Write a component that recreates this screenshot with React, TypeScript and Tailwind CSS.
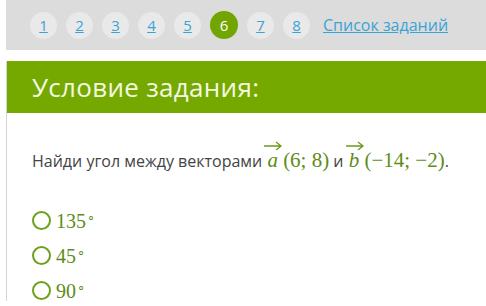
const pages = [1, 2, 3, 4, 5, 6, 7, 8];
const answers = ["135", "45", "90"];

function Vec({ letter }: { letter: string }) {
  return (
    <span className="relative inline-block italic px-[1px]">
      <svg
        className="absolute left-[-3px] top-[-5px]"
        width="20"
        height="10"
        viewBox="0 0 20 10"
        fill="none"
        stroke="#6b9a1c"
        strokeWidth="1.3"
      >
        <path d="M1 6h17M13 2l5 4-5 4" />
      </svg>
      {letter}
    </span>
  );
}

export default function App() {
  return (
    <div className="w-[486px] h-[306px] overflow-hidden bg-white font-['Open_Sans',sans-serif]">
      {/* Pager */}
      <div className="ml-[6px] h-[50px] bg-[#dcdcdc] flex items-center pl-[24px] gap-[9px]">
        {pages.map((p) =>
          p === 6 ? (
            <div
              key={p}
              className="w-[28px] h-[28px] rounded-full bg-[#72a500] text-white text-[15px] flex items-center justify-center"
            >
              {p}
            </div>
          ) : (
            <div
              key={p}
              className="w-[27px] h-[27px] rounded-full bg-[#e9e9e9] text-[#3aa3d6] text-[15px] underline flex items-center justify-center"
            >
              {p}
            </div>
          )
        )}
        <a className="ml-[4px] text-[#3aa3d6] text-[16px] underline">Список заданий</a>
      </div>

      {/* Card */}
      <div className="mt-[11px] ml-[6px] border-l border-[#d4d4d4]">
        <div className="h-[52px] bg-[#76a900] flex items-center pl-[25px] text-[#f3f8e0] text-[26px] tracking-[0.3px]">
          Условие задания:
        </div>
        <div className="pl-[25px] pt-[32px]">
          <div className="text-[16px] text-[#444] flex items-baseline">
            <span>Найди угол между векторами&nbsp;</span>
            <span className="font-['Liberation_Serif',serif] text-[#5e8c17] text-[21px]">
              <Vec letter="a" />&thinsp;(6;&nbsp;8)
            </span>
            <span>&nbsp;и&nbsp;</span>
            <span className="font-['Liberation_Serif',serif] text-[#5e8c17] text-[21px]">
              <Vec letter="b" />&thinsp;(−14;&nbsp;−2)
            </span>
            <span>.</span>
          </div>
          <div className="mt-[34px] flex flex-col gap-[15px]">
            {answers.map((a) => (
              <div key={a} className="flex items-center gap-[5px]">
                <div className="w-[19px] h-[19px] rounded-full border-2 border-[#6f9f1e]" />
                <span className="font-['Liberation_Serif',serif] text-[#5e8c17] text-[20px] leading-[20px]">
                  {a}
                  <sup className="text-[13px] ml-[1px]">∘</sup>
                </span>
              </div>
            ))}
          </div>
        </div>
      </div>
    </div>
  );
}
